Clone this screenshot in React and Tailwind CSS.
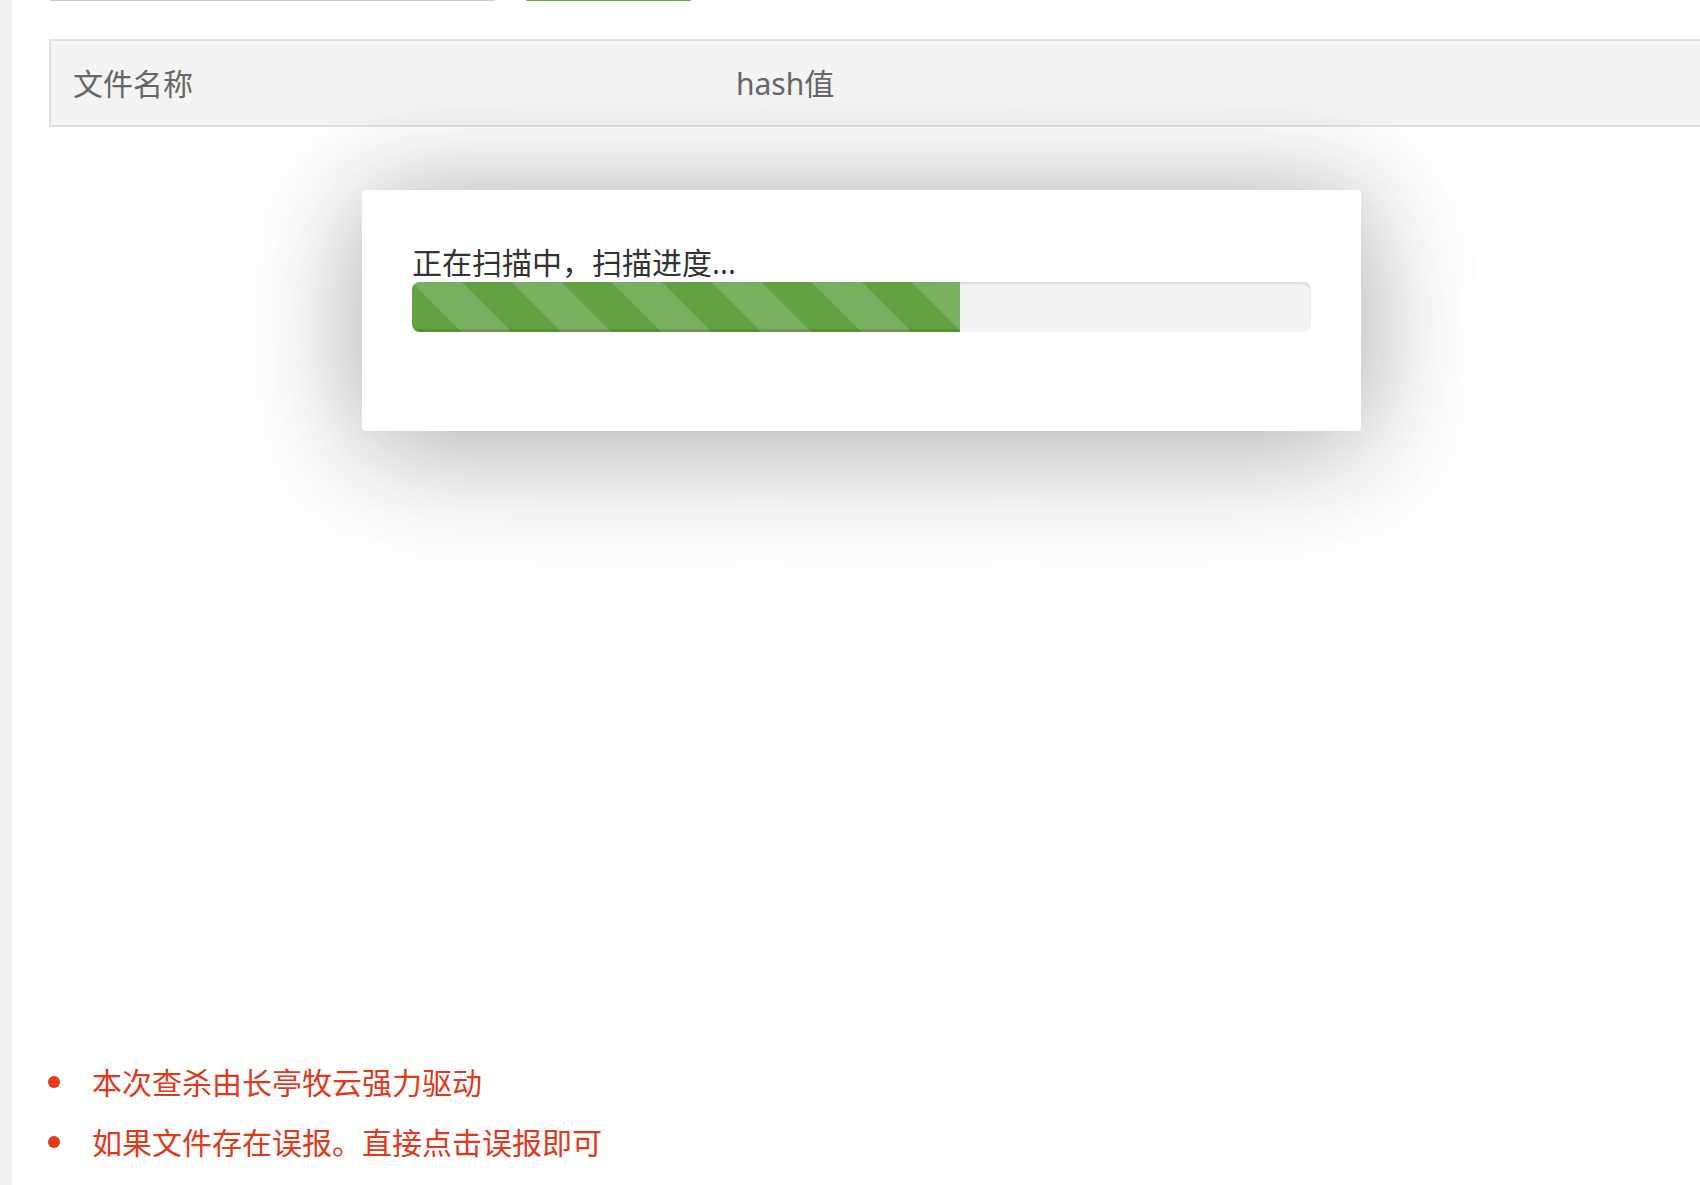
import React from 'react';

const tips = ['本次查杀由长亭牧云强力驱动', '如果文件存在误报。直接点击误报即可'];

function ScanProgress({ progress }) {
    return (
        <div className="absolute left-[362px] top-[190px] w-[999px] h-[241px] rounded-[4px] bg-white shadow-[0_0_110px_rgba(0,0,0,0.26),0_40px_140px_rgba(0,0,0,0.12)] px-[50px] pt-[58px]">
            <p className="text-[30px] leading-[30px] text-[#333] whitespace-nowrap">正在扫描中，扫描进度...</p>
            <div className="mt-[4px] h-[50px] rounded-[8px] bg-[#f4f4f4] shadow-[inset_0_2px_3px_rgba(0,0,0,0.1)] overflow-hidden">
                <div
                    className="h-full bg-[#62a243] bg-[linear-gradient(45deg,rgba(255,255,255,0.15)_25%,transparent_25%,transparent_50%,rgba(255,255,255,0.15)_50%,rgba(255,255,255,0.15)_75%,transparent_75%,transparent)] bg-[length:100px_100px] shadow-[inset_0_-3px_0_rgba(0,0,0,0.12)]"
                    style={{ width: `${progress}%` }}
                ></div>
            </div>
        </div>
    );
}

export default function App() {
    return (
        <div className="relative flex w-[1700px] h-[1185px] overflow-hidden bg-white font-['Noto_Sans','Noto_Sans_CJK_SC',sans-serif]">
            {/* left gutter */}
            <div className="w-[12px] shrink-0 bg-[#f0f0f0]"></div>

            <div className="flex-1 pl-[37px]">
                {/* search bar, scrolled mostly out of view */}
                <div className="flex items-end gap-[30px] h-[40px] -mt-[39px] pl-[1px]">
                    <div className="w-[445px] h-full border border-[#cccccc] bg-white"></div>
                    <div className="w-[167px] h-full rounded-[3px] bg-[#5aae3a]"></div>
                </div>

                {/* table header */}
                <div className="mt-[38px] w-[1700px] h-[88px] flex items-center border-2 border-[#e2e2e2] bg-[#f4f4f4] pl-[22px] text-[30px] text-[#666]">
                    <div className="w-[663px]">文件名称</div>
                    <div>hash值</div>
                </div>

                {/* empty table body */}
                <div className="h-[925px]"></div>

                <ul className="-ml-[1px]">
                    {tips.map(tip => (
                        <li key={tip} className="flex items-center h-[60px] text-[30px] text-[#e0391c]">
                            <span className="w-[12px] h-[12px] rounded-full bg-[#e0391c] shrink-0"></span>
                            <span className="ml-[32px]">{tip}</span>
                        </li>
                    ))}
                </ul>
            </div>

            <ScanProgress progress={61} />
        </div>
    );
}
